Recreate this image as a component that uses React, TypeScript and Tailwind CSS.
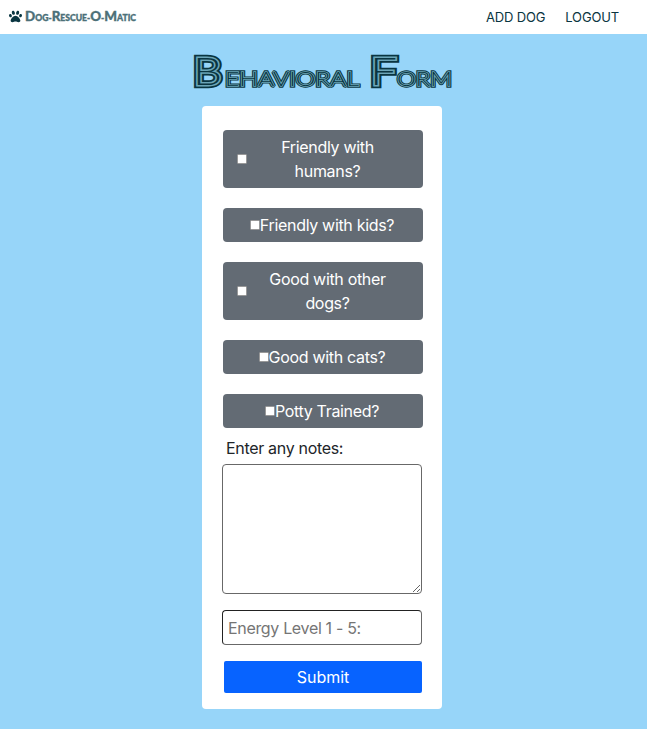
import { FaPaw } from "react-icons/fa";

function Check({ label, tall = false }: { label: string; tall?: boolean }) {
  return (
    <label
      className={
        "mb-5 flex w-[200px] items-center justify-center rounded bg-[#636b74] text-center text-base leading-6 tracking-[-0.32px] text-white " +
        (tall ? "h-[58px] px-3.5" : "h-[34px] pr-0.5")
      }
    >
      <input
        type="checkbox"
        className="mb-px h-2.5 w-2.5 shrink-0 appearance-none rounded-[1px] border border-[#999] bg-white bg-clip-padding"
      />
      <span className={tall ? "ml-[19px] mr-5 grow" : ""}>{label}</span>
    </label>
  );
}

const line = "[stroke-width:calc(var(--w)*1em)]";

function Title() {
  return (
    <h1>
      <svg width="260" height="40" viewBox="0 0 260 40" className="block overflow-visible">
        <defs>
          <text id="title" fontFamily="Lato, sans-serif" fontWeight="300" y="32" strokeMiterlimit="1.6">
            <tspan x="0" fontSize="38" className={line} textLength="29" lengthAdjust="spacingAndGlyphs">B</tspan>
            <tspan x="32" y="33" fontSize="20.5" className={line} textLength="134" lengthAdjust="spacingAndGlyphs">EHAVIORAL</tspan>
            <tspan> </tspan>
            <tspan x="177" y="32" fontSize="38" className={line} textLength="27" lengthAdjust="spacingAndGlyphs">F</tspan>
            <tspan x="204" y="33" fontSize="20.5" className={line} textLength="55" lengthAdjust="spacingAndGlyphs">ORM</tspan>
          </text>
        </defs>
        <use href="#title" className="fill-[#093541] stroke-[#093541] [--w:0.165]" />
        <use href="#title" className="fill-[#6ba5b8] stroke-[#6ba5b8] [--w:0.075]" />
        <use href="#title" className="fill-[#093541] stroke-none [--w:0]" />
      </svg>
    </h1>
  );
}

function Brand() {
  return (
    <svg width="112" height="16" viewBox="0 0 112 16" className="ml-[3px] overflow-visible">
      <text x="0" y="12" fontFamily="Lato, sans-serif" fontWeight="900" fill="#4c7078" stroke="#4c7078" strokeWidth=".35" fontSize="9" textLength="111" lengthAdjust="spacingAndGlyphs">
        <tspan fontSize="14">D</tspan>OG-<tspan fontSize="14">R</tspan>ESCUE-<tspan fontSize="14">O</tspan>-<tspan fontSize="14">M</tspan>ATIC
      </text>
    </svg>
  );
}

export default function App() {
  return (
    <div className="min-h-[729px] bg-[#97d5f9] font-['Inter',sans-serif] text-[#212529]">
      <nav className="flex h-[34px] items-center justify-between bg-white pb-px pl-[9px] pr-7 text-[#093541]">
        <div className="flex items-center">
          <FaPaw size={13} />
          <Brand />
        </div>
        <div className="flex gap-5 text-[13px] leading-5 tracking-[-0.15px]">
          <a>ADD DOG</a>
          <a>LOGOUT</a>
        </div>
      </nav>
      <div className="-mb-px flex h-[73px] pl-[193px] pt-[19px]">
        <Title />
      </div>
      <form className="ml-[202px] h-[603px] w-60 rounded bg-white pl-5 pt-6">
        <div className="pl-px">
          <Check label="Friendly with humans?" tall />
          <Check label="Friendly with kids?" />
          <Check label="Good with other dogs?" tall />
          <Check label="Good with cats?" />
          <Check label="Potty Trained?" />
        </div>
        <label className="-mt-3 block pl-1 leading-6 tracking-[-0.32px]">Enter any notes:</label>
        <textarea className="mt-1 block h-[130px] w-[200px] resize rounded border border-[#686868] bg-white" />
        <input
          placeholder="Energy Level 1 - 5:"
          className="mt-4 block h-[35px] w-[200px] rounded border border-[#686868] border-l-[#222] border-t-[#222] px-[5px] tracking-[-0.33px] placeholder:text-[#757575]"
        />
        <button type="button" className="ml-0.5 mt-4 block h-8 w-[198px] rounded-[2px] bg-[#0763ff] leading-6 text-white">
          Submit
        </button>
      </form>
    </div>
  );
}
